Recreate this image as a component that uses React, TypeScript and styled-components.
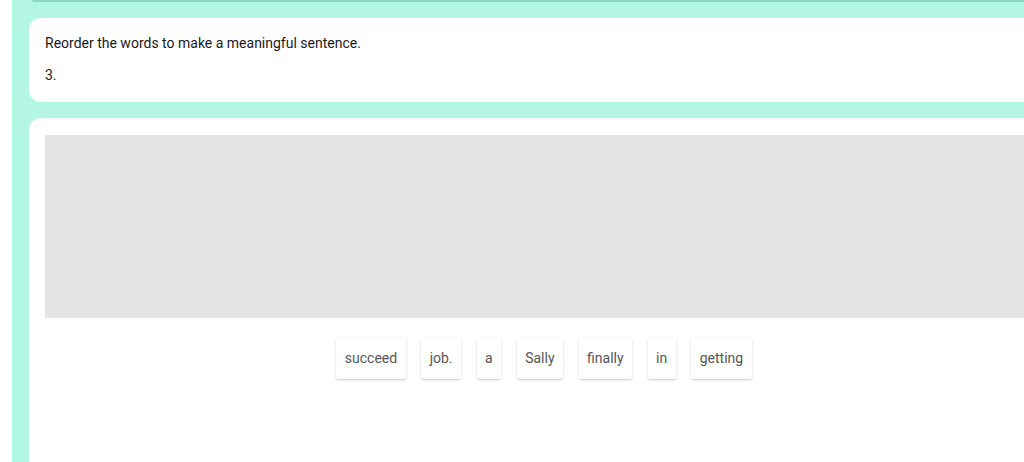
import React from "react";
import styled, { createGlobalStyle } from "styled-components";

const Global = createGlobalStyle`
  html, body { margin: 0; padding: 0; background: #ffffff; overflow: hidden; }
  body { font-family: Roboto, "Liberation Sans", Arial, sans-serif; }
`;

const Page = styled.div`
  width: 1088px;
  padding: 0 12px;
  box-sizing: border-box;
`;

const Panel = styled.div`
  background: #b3f6e3;
  padding: 0 17px 0 17px;
  min-height: 462px;
  display: flex;
  flex-direction: column;
  gap: 16px;
`;

const PrevCardEdge = styled.div`
  height: 2px;
  margin-left: 3px;
  background: #8fd6c1;
  border-radius: 0 0 0 8px;
`;

const Card = styled.div<{ $grow?: boolean }>`
  background: #ffffff;
  border-radius: 12px;
  padding: ${(p) => (p.$grow ? "17px 16px" : "15px 16px 17px")};
  ${(p) => (p.$grow ? "flex: 1; min-height: 360px;" : "")}
`;

const Line = styled.p<{ $gap?: number }>`
  margin: ${(p) => p.$gap ?? 0}px 0 0;
  font-size: 14px;
  line-height: 20px;
  color: #1a1a1a;
`;

const DropZone = styled.div`
  background: #e3e3e3;
  height: 183px;
`;

const WordRow = styled.div`
  display: flex;
  justify-content: center;
  gap: 15.5px;
  margin-top: 20px;
`;

const Word = styled.div`
  background: #ffffff;
  padding: 10px 8.5px;
  font-size: 14px;
  line-height: 21px;
  color: #555555;
  border-radius: 2px;
  box-shadow: 0 1px 3px rgba(0, 0, 0, 0.16), 0 1px 1px rgba(0, 0, 0, 0.06);
`;

const words = ["succeed", "job.", "a", "Sally", "finally", "in", "getting"];

export default function App() {
  return (
    <>
      <Global />
      <Page>
        <Panel>
          <PrevCardEdge />
          <Card>
            <Line>Reorder the words to make a meaningful sentence.</Line>
            <Line $gap={12}>3.</Line>
          </Card>
          <Card $grow>
            <DropZone />
            <WordRow>
              {words.map((w) => (
                <Word key={w}>{w}</Word>
              ))}
            </WordRow>
          </Card>
        </Panel>
      </Page>
    </>
  );
}
